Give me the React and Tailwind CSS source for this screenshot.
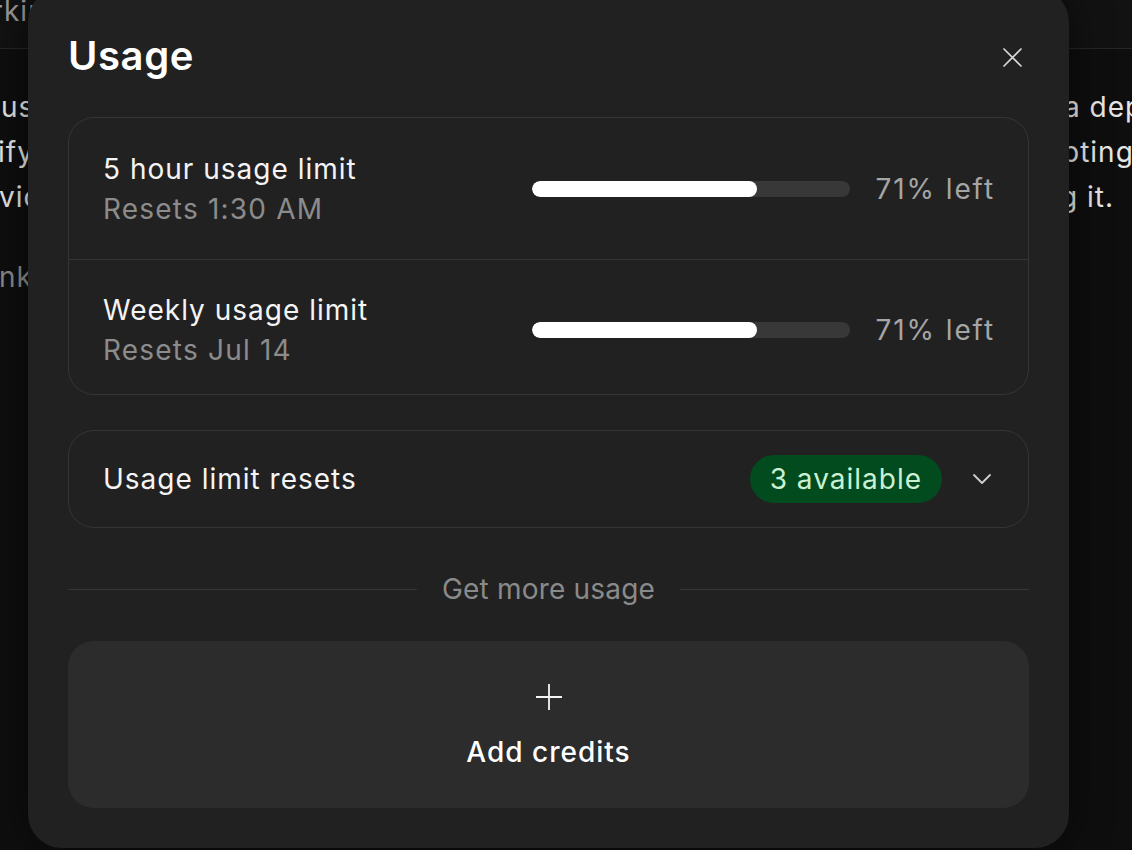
import React from "react";

const rows = [
  { title: "5 hour usage limit", sub: "Resets 1:30 AM", pct: 71, h: "h-[141px]" },
  { title: "Weekly usage limit", sub: "Resets Jul 14", pct: 71, h: "h-[135px] pt-[6px] border-t border-[#353535]" },
];

function UsageRow({ title, sub, pct, h }) {
  return (
    <div className={`flex items-center pl-[34px] pr-[33px] ${h}`}>
      <div className="flex-1 flex flex-col gap-[4px] tracking-[1.2px]">
        <span className="text-[28px] leading-[36px] text-[#f4f4f4] tracking-[1px]">{title}</span>
        <span className="text-[28px] leading-[36px] text-[#8c8c8c]">{sub}</span>
      </div>
      <div className="w-[318px] h-[16px] rounded-full bg-[#383838] overflow-hidden">
        <div className="h-full rounded-full bg-white" style={{ width: `${pct}%` }} />
      </div>
      <span className="ml-[26px] text-[28px] text-[#a5a5a5] tracking-[1.9px]">{pct}% left</span>
    </div>
  );
}

export default function App() {
  return (
    <div className="relative w-[1132px] h-[850px] overflow-hidden bg-[#0e0e0e] font-['Inter',sans-serif] tracking-[1px] whitespace-nowrap">
      {/* page behind the dialog */}
      <div className="h-[49px] border-b border-[#262626] bg-[#121212] flex items-start">
        <span className="ml-[-8px] mt-[-3px] text-[28px] leading-[28px] text-[#9a9a9a]">rking</span>
      </div>
      <div className="pt-[36px] text-[28px] leading-[45px] text-[#e6e6e6]">
        <div className="grid grid-cols-[1064px_1fr]">
          <span className="ml-[1px]">use</span>
          <span>a dependency</span>
        </div>
        <div className="grid grid-cols-[1062px_1fr]">
          <span className="ml-[-2px]">ify</span>
          <span>pting</span>
        </div>
        <div className="grid grid-cols-[1060px_1fr]">
          <span className="ml-[-1px]">vice</span>
          <span>g it.</span>
        </div>
        <div className="mt-[35px] text-[#8a8a8a]">
          <span className="ml-[-1px]">nk</span>
        </div>
      </div>

      {/* dialog */}
      <div className="absolute left-[28px] top-[-12px] w-[1041px] h-[860px] rounded-[34px] bg-[#212121] px-[40px] shadow-[0_0_40px_rgba(0,0,0,0.5)]">
        <div className="h-[112px] pt-[24px] flex items-center justify-between">
          <h1 className="text-[40px] font-semibold text-white tracking-[0.6px]">Usage</h1>
          <svg width="19" height="19" viewBox="0 0 19 19" className="mr-[7px] mt-[2px]" fill="none" stroke="#d8d8d8" strokeWidth="1.7" strokeLinecap="round">
            <path d="M1 1 18 18M18 1 1 18" />
          </svg>
        </div>

        <div className="mt-[17px] rounded-[26px] border border-[#353535]">
          {rows.map((r) => (
            <UsageRow key={r.title} {...r} />
          ))}
        </div>

        <div className="mt-[35px] h-[98px] rounded-[26px] border border-[#353535] flex items-center pl-[34px] pr-[36px]">
          <span className="flex-1 text-[28px] text-[#f4f4f4]">Usage limit resets</span>
          <span className="h-[48px] px-[20px] rounded-full bg-[#024b1f] text-[#c9f1d2] text-[28px] flex items-center">3 available</span>
          <svg width="20" height="12" viewBox="0 0 20 12" className="ml-[30px]" fill="none" stroke="#cfcfcf" strokeWidth="1.8" strokeLinecap="round" strokeLinejoin="round">
            <path d="M2 2 10 10 18 2" />
          </svg>
        </div>

        <div className="mt-[49px] h-[24px] flex items-center gap-[25px]">
          <div className="flex-1 h-px bg-[#363636]" />
          <span className="text-[28px] text-[#8a8a8a] tracking-[0.2px]">Get more usage</span>
          <div className="flex-1 h-px bg-[#363636]" />
        </div>

        <button className="mt-[40px] w-full h-[167px] rounded-[26px] bg-[#2c2c2c] flex flex-col items-center justify-center gap-[26px]">
          <svg width="28" height="28" viewBox="0 0 28 28" fill="none" stroke="#f4f4f4" strokeWidth="1.8">
            <path d="M14 1v26M1 14h26" />
          </svg>
          <span className="text-[28px] font-medium text-white leading-[30px] tracking-[1px]">Add credits</span>
        </button>
      </div>
    </div>
  );
}
